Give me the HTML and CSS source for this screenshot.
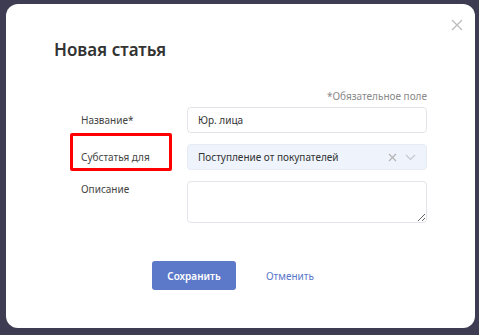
FILE: index.html
```html
<!DOCTYPE html>
<html lang="ru">
<head>
  <meta charset="UTF-8" />
  <meta name="viewport" content="width=device-width, initial-scale=1.0"/>
  <link rel="stylesheet" href="styles.css">
</head>
<body>
  <div class="modal">
    <button class="close-btn" aria-label="Закрыть">
      <svg width="12" height="12" viewBox="0 0 12 12"><path d="M1 1L11 11M11 1L1 11" stroke="#bdbdbd" stroke-width="1.4"/></svg>
    </button>

    <h2 class="modal-title">Новая статья</h2>

    <div class="required-note">*Обязательное поле</div>

    <div class="form-grid">
      <label class="field-label" for="name">Название*</label>
      <input class="field-input" id="name" type="text" value="Юр. лица">

      <label class="field-label"><span class="marked">Субстатья для</span></label>
      <div class="field-select">
        <span class="select-value">Поступление от покупателей</span>
        <span class="select-icons">
          <svg width="9" height="9" viewBox="0 0 9 9"><path d="M1 1L8 8M8 1L1 8" stroke="#b5b5b5" stroke-width="1.3"/></svg>
          <svg width="11" height="7" viewBox="0 0 11 7"><path d="M1 1L5.5 5.5L10 1" stroke="#c2c6cf" stroke-width="1.1" fill="none"/></svg>
        </span>
      </div>

      <label class="field-label top" for="desc">Описание</label>
      <textarea class="field-textarea" id="desc"></textarea>
    </div>

    <div class="actions">
      <button class="btn-save">Сохранить</button>
      <button class="btn-cancel">Отменить</button>
    </div>
  </div>
</body>
</html>
```

FILE: styles.css
```css
body {
  margin: 0;
  padding: 0;
  background-color: #3d3c52;
  font-family: 'Noto Sans', 'Open Sans', sans-serif;
  color: #333;
}

.modal {
  position: relative;
  box-sizing: border-box;
  width: 469px;
  height: 324px;
  margin: 4px 0 0 6px;
  background-color: #fff;
  border-radius: 12px;
  padding: 33px 48px 0 48px;
}

.close-btn {
  position: absolute;
  top: 15px;
  right: 12px;
  border: none;
  background: none;
  padding: 0;
  cursor: pointer;
}

.modal-title {
  margin: 0;
  font-size: 17px;
  font-weight: 600;
  line-height: 26px;
  color: #333;
}

.required-note {
  margin-top: 26px;
  text-align: right;
  font-size: 10px;
  line-height: 14px;
  color: #8a8a8a;
}

.form-grid {
  display: grid;
  grid-template-columns: 106px 240px;
  row-gap: 11px;
  margin-top: 4px;
  padding-left: 27px;
  align-items: center;
}

.field-label {
  font-size: 10px;
  color: #444;
}

.field-label.top {
  align-self: start;
  padding-top: 1px;
}

.marked {
  position: relative;
}

.marked::after {
  content: '';
  position: absolute;
  left: -11px;
  top: -17px;
  width: 96px;
  height: 32px;
  border: 3px solid #ff0000;
  border-radius: 2px;
}

.field-input {
  box-sizing: border-box;
  height: 26px;
  border: 1px solid #e2e4e9;
  border-radius: 4px;
  padding: 0 10px;
  font-family: inherit;
  font-size: 10px;
  color: #333;
}

.field-select {
  box-sizing: border-box;
  height: 26px;
  border: 1px solid #e6ebf4;
  border-radius: 4px;
  background-color: #eef3fc;
  padding: 0 10px;
  display: flex;
  align-items: center;
  justify-content: space-between;
  font-size: 10px;
  color: #333;
}

.select-icons {
  display: flex;
  align-items: center;
  gap: 8px;
}

.field-textarea {
  box-sizing: border-box;
  height: 42px;
  border: 1px solid #e2e4e9;
  border-radius: 4px;
  font-family: inherit;
}

.actions {
  display: flex;
  align-items: center;
  gap: 30px;
  margin-top: 38px;
  padding-left: 98px;
}

.btn-save {
  width: 84px;
  height: 29px;
  border: none;
  border-radius: 3px;
  background-color: #5b78c9;
  color: #fff;
  font-family: inherit;
  font-size: 10px;
  font-weight: 600;
}

.btn-cancel {
  border: none;
  background: none;
  padding: 0;
  color: #5b78c9;
  font-family: inherit;
  font-size: 10px;
}
```
